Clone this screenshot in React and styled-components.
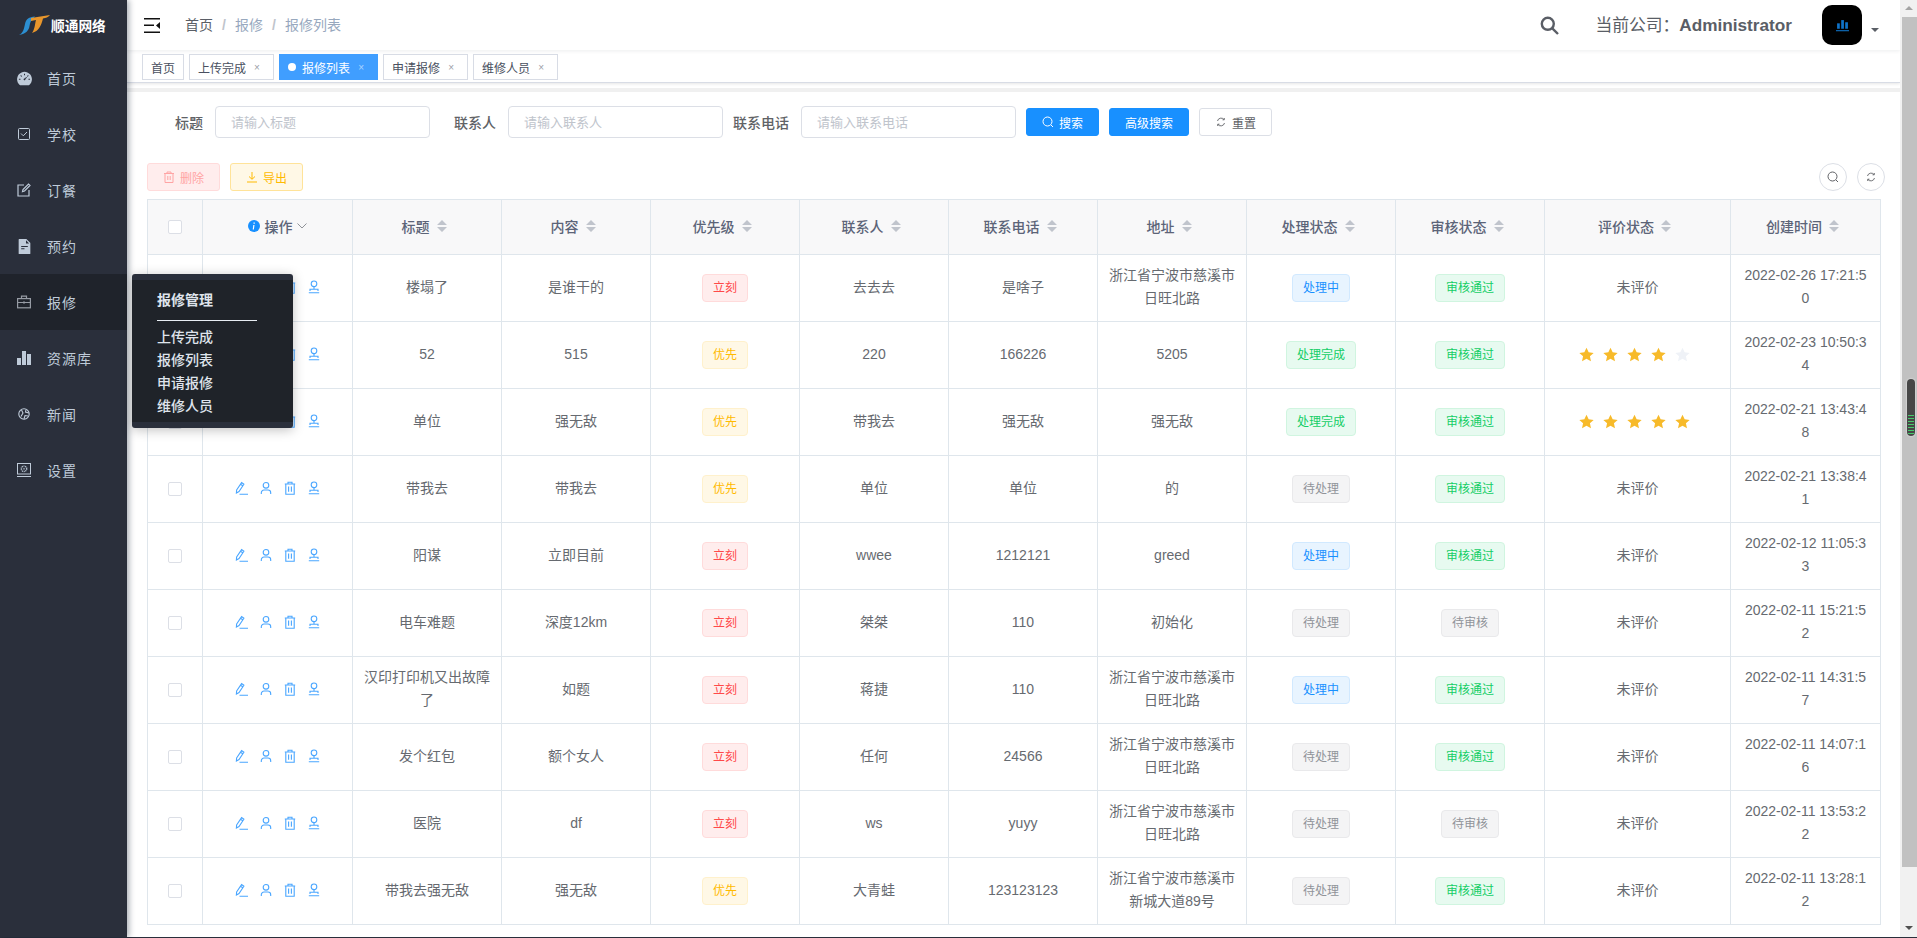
import React from "react";
import styled, { createGlobalStyle } from "styled-components";
import { AiFillDashboard, AiFillFileText } from "react-icons/ai";

const Global = createGlobalStyle`
  html, body { margin: 0; padding: 0; height: 100%; overflow: hidden; }
  body { font-family: "Liberation Sans", "Noto Sans CJK SC", sans-serif; background: #2a2f3b; }
  * { box-sizing: border-box; }
`;

const Page = styled.div`
  width: 1917px; height: 938px; display: grid; grid-template-columns: 127px 1773px 17px;
  padding-bottom: 1px; background: #2a2f3b; position: relative; overflow: hidden;
`;
const Sidebar = styled.aside`
  background: #2a2f3b; box-shadow: 2px 0 6px rgba(0,21,41,.35); z-index: 3; position: relative;
`;
const Brand = styled.div`
  height: 50px; display: flex; align-items: center; padding: 0 0 0 19px; gap: 1px;
  color: #fff; font-weight: 700; font-size: 13.7px;
`;
const NavList = styled.nav`display: flex; flex-direction: column;`;
const NavItem = styled.div`
  height: 56px; display: flex; align-items: center; padding-left: 17px; gap: 16px;
  font-size: 14px; letter-spacing: 1px; color: #bfcbd9;
  background: ${p => (p.$active ? "#1f232b" : "transparent")};
  svg { width: 14px; height: 14px; flex: none; color: ${p => (p.$active ? "#969ba4" : "#bfcbd9")}; }
`;
const NavDash = styled(AiFillDashboard)`
  && { width: 17px; height: 17px; margin: 0 -1.5px; }
`;
const NavFile = styled(AiFillFileText)`
  && { width: 17px; height: 17px; margin: 0 -1.5px; }
`;
const Popup = styled.div`
  position: absolute; left: 132px; top: 274px; width: 161px; height: 154px; z-index: 5;
  background: #1f2329; border-top: 6px solid #2a2f3b; border-bottom: 6px solid #2a2f3b; border-radius: 3px;
  box-shadow: 0 2px 12px rgba(0,0,0,.25); padding: 9px 0 0 25px; color: #dfe4ec; font-size: 14px;
`;
const PopupTitle = styled.div`
  font-weight: 700; line-height: 22px; width: 100px; padding-bottom: 9px; border-bottom: 1px solid #e8edf3; margin-bottom: 5px;
`;
const PopupLink = styled.div`line-height: 23px; font-weight: 500;`;

const Main = styled.main`background: #fff; display: flex; flex-direction: column; min-width: 0;`;
const TopBar = styled.header`
  height: 50px; flex: none; display: flex; align-items: center; padding-left: 17px; background: #fff;
  box-shadow: 0 1px 4px rgba(0,21,41,.08); position: relative; z-index: 2;
`;
const Crumbs = styled.div`display: flex; margin-left: 25px; font-size: 14px; color: #97a8be; line-height: 20px;`;
const CrumbHome = styled.span`color: #5a5e66;`;
const CrumbSep = styled.span`width: 22px; text-align: center; color: #c0c4cc; font-weight: 700;`;
const TopRight = styled.div`margin-left: auto; display: flex; align-items: center; padding-right: 20px;`;
const Company = styled.div`
  margin: 0 0 2px 36px; font-size: 16.8px; color: #5a5e66;
  b { font-size: 17.2px; }
`;
const Avatar = styled.div`
  width: 40px; height: 40px; margin-left: 30px; background: #000; border-radius: 10px;
  display: flex; align-items: center; justify-content: center;
`;
const Caret = styled.div`
  width: 0; height: 0; margin: 10px 1px 0 9px; border-left: 4px solid transparent; border-right: 4px solid transparent;
  border-top: 4px solid #5a5e66;
`;
const TabBar = styled.div`
  height: 33px; flex: none; display: flex; align-items: flex-start; gap: 5px; padding: 4px 0 0 15px;
  background: #fff; border-bottom: 1px solid #d8dce5; box-shadow: 0 1px 3px rgba(0,0,0,.1);
  position: relative; z-index: 1;
`;
const Tab = styled.div`
  height: 26px; display: flex; align-items: center; padding: 0 8px; font-size: 12px;
  color: ${p => (p.$active ? "#fff" : "#495060")}; background: ${p => (p.$active ? "#409eff" : "#fff")};
  border: 1px solid ${p => (p.$active ? "#409eff" : "#d8dce5")};
`;
const TabDot = styled.i`width: 8px; height: 8px; border-radius: 50%; background: #fff; margin-right: 6px;`;
const TabClose = styled.span`width: 14px; margin-left: 4px; margin-right: 1px; text-align: center; font-size: 10px; opacity: .55;`;
const Strip = styled.div`height: 4px; flex: none; margin-top: 5px; background: #f0f0f0;`;
const Content = styled.div`padding: 14px 20px 0; flex: 1; min-height: 0;`;
const Form = styled.form`display: flex; align-items: center; gap: 12px; padding-left: 2px; height: 32px; margin: 0;`;
const Field = styled.div`width: 281px; display: flex; align-items: center;`;
const Label = styled.label`width: 54px; margin-right: 12px; text-align: right; white-space: nowrap; font-size: 14px; font-weight: 500; color: #606266; flex: none; direction: rtl;`;
const Input = styled.input`
  width: 215px; height: 32px; border: 1px solid #dcdfe6; border-radius: 4px; padding: 0 15px; font: inherit; font-size: 13px; outline: none;
  &::placeholder { color: #c0c4cc; }
`;
const FormBtns = styled.div`display: flex; gap: 10px; margin-left: -2px;`;
const Btn = styled.button`
  height: 28px; padding: 0 15px; display: inline-flex; align-items: center; gap: 5px; font: inherit; font-size: 12px; border-radius: 3px;
  background: ${p => p.$bg}; border: 1px solid ${p => p.$line}; color: ${p => p.$fg};
  svg { width: 12px; height: 12px; flex: none; }
`;
const Toolbar = styled.div`display: flex; align-items: center; gap: 10px; margin: 24px -5px 8px 0; padding-top: 1px; height: 29px;`;
const Spacer = styled.div`flex: 1;`;
const RoundBtn = styled.button`
  width: 28px; height: 28px; border-radius: 50%; background: #fff; border: 1px solid #dcdfe6; color: #606266;
  display: flex; align-items: center; justify-content: center; padding: 0;
  svg { width: 12px; height: 12px; }
`;
const Table = styled.table`
  width: 1733px; table-layout: fixed; border-collapse: collapse; font-size: 14px; color: #666a70; text-align: center;
  th, td { border: 1px solid #dfe6ec; padding: 0 10px 2px; }
  td:last-child { padding: 0 12px 2px; }
`;
const Head = styled.th`height: 55px; background: #f8f8f9; color: #5c6478; font-weight: 500; font-size: 14px;`;
const HeadInner = styled.span`display: inline-flex; align-items: center; gap: 7px; padding-right: 6px;`;
const HeadOps = styled.span`
  display: inline-flex; align-items: center; gap: 5px; padding-left: 1px;
  svg:last-child { margin-left: -1px; margin-right: 2px; }
`;
const Cell = styled.td`height: 67px; line-height: 23px; word-break: break-all;`;
const Check = styled.span`display: inline-block; width: 14px; height: 14px; border: 1px solid #dcdfe6; border-radius: 2px; background: #fff; vertical-align: middle;`;
const Actions = styled.div`display: flex; justify-content: center; gap: 10px; svg { width: 14px; height: 14px; display: block; }`;
const Tag = styled.span`
  display: inline-block; height: 28px; line-height: 26px; padding: 0 10px; font-size: 12px; border-radius: 4px; white-space: nowrap;
  margin-top: 2px; vertical-align: middle;
  background: ${p => p.$c[0]}; border: 1px solid ${p => p.$c[1]}; color: ${p => p.$c[2]};
`;
const Stars = styled.div`display: flex; justify-content: center; gap: 9px; margin-right: 6px; svg { width: 15px; height: 15px; display: block; }`;

const Track = styled.div`background: #f1f1f1; position: relative; padding-top: 17px; z-index: 4;`;
const Thumb = styled.div`height: 850px; margin-left: 2px; background: #c1c1c1;`;
const Arrow = styled.i`
  position: absolute; left: 5px; width: 0; height: 0; border-left: 4px solid transparent; border-right: 4px solid transparent;
  ${p => (p.$up ? "top: 6px; border-bottom: 4px solid #a3a3a3;" : "top: 926px; border-top: 4px solid #505050;")}
`;
const Grip = styled.div`
  position: absolute; left: 7px; top: 379px; width: 8px; height: 57px; background: #474747; border-radius: 4px; overflow: hidden;
  box-shadow: 0 0 2px rgba(255,255,255,.9); display: flex; flex-direction: column; justify-content: flex-end; padding: 0 1px 2px; gap: 2px;
`;
const GripLine = styled.i`height: 1px; background: #47c96b;`;

const Logo = () => (
  <svg width="31" height="20" viewBox="0 0 31 20">
    <path d="M0 20C4 18 5 14 6 9 7 4 10 2 16 1.500L14 4C12 5 11 8 10.500 11 10 15 7 19 0 20Z" fill="#2c8fd1" />
    <path d="M12 3 31 0C29 2.500 27 3 24 3.500 22 11 20 16 13 18 16 14 16 8 17 5L12 6Z" fill="#e8962c" />
  </svg>
);
const CheckSquare = () => (
  <svg viewBox="0 0 14 14" fill="none" stroke="currentColor" strokeWidth="1">
    <rect x="1.500" y="1.500" width="11" height="11" rx="1" />
    <path d="M4 6.500 6.300 8.800 10 5" />
  </svg>
);
const EditSquare = () => (
  <svg viewBox="0 0 14 14" fill="none" stroke="currentColor" strokeWidth="1.200">
    <path d="M7 2H1v11h11V7" />
    <path d="M5.500 8.700 6 6.500 11.500 1 13 2.500 7.500 8 Z" />
  </svg>
);
const Case = () => (
  <svg viewBox="0 0 14 14" fill="none" stroke="currentColor" strokeWidth="1.200">
    <rect x=".6" y="3.600" width="12.800" height="9.200" />
    <path d="M4.500 3.500V1.200h5v2.300M.5 7.500h13M7 6.300v2.400" />
  </svg>
);
const Bars = () => (
  <svg viewBox="0 0 14 14" fill="currentColor">
    <rect x="0" y="7" width="4" height="7" /><rect x="5" y="0" width="4" height="14" /><rect x="10" y="3" width="4" height="11" />
  </svg>
);
const Globe = () => (
  <svg viewBox="0 0 14 14" fill="none" stroke="currentColor" strokeWidth="1.100">
    <circle cx="7" cy="7" r="5.200" />
    <path d="M4.500 3 6 6 4 9.500M7 12l1-3.500 3 .5M9 2.500 8.500 5l3.500 1" />
  </svg>
);
const Safe = () => (
  <svg viewBox="0 0 14 14" fill="none" stroke="currentColor" strokeWidth="1">
    <rect x=".5" y=".5" width="13" height="10.500" />
    <circle cx="7" cy="5.800" r="2.700" strokeDasharray="1 .7" strokeWidth="1.400" />
    <circle cx="7" cy="5.800" r="1" fill="currentColor" stroke="none" opacity=".6" />
    <path d="M0 13.500h14" />
  </svg>
);
const Fold = () => (
  <svg width="16" height="15" viewBox="0 0 16 15" fill="#111">
    <rect x="0" y="0" width="16" height="1.500" /><rect x="0" y="6.500" width="10" height="1.500" />
    <rect x="0" y="13.500" width="16" height="1.500" /><path d="M16 4v7l-4-3.500Z" />
  </svg>
);
const BigSearch = () => (
  <svg width="19" height="19" viewBox="0 0 19 19" fill="none" stroke="#5a5e66" strokeWidth="2.400">
    <circle cx="7.800" cy="7.800" r="6" /><path d="M12.300 12.300 18 18" />
  </svg>
);
const AvatarIcon = () => (
  <svg width="13" height="13" viewBox="0 0 12 12" fill="#0f72c7">
    <rect x="1" y="4" width="2.500" height="5" /><rect x="4.800" y="1" width="2.500" height="8" /><rect x="8.500" y="3" width="2.500" height="6" />
    <rect x="0" y="10.300" width="12" height="1" />
  </svg>
);
const ThinSearch = () => (
  <svg viewBox="0 0 12 12" fill="none" stroke="currentColor" strokeWidth="1">
    <circle cx="5.500" cy="5.500" r="4.500" /><path d="M9 9l2 2" />
  </svg>
);
const ThinRefresh = () => (
  <svg viewBox="0 0 12 12" fill="none" stroke="currentColor" strokeWidth=".9">
    <path d="M2.500 5A3.700 3.700 0 0 1 9 3.500M9.500 7A3.700 3.700 0 0 1 3 8.500" /><path d="M9.300 2v1.800H7.500M2.700 10V8.200h1.800" />
  </svg>
);
const TrashBtn = () => (
  <svg viewBox="0 0 12 12" fill="none" stroke="currentColor" strokeWidth="1">
    <path d="M1 2.500h10M4 2.500V1h4v1.500M2 2.500V11.500h8V2.500M4.800 5v4M7.200 5v4" />
  </svg>
);
const Download = () => (
  <svg viewBox="0 0 12 12" fill="none" stroke="currentColor" strokeWidth="1">
    <path d="M1 11h10M6 1v7M3 5.500 6 8.300 9 5.500" />
  </svg>
);
const Sort = () => (
  <svg width="10" height="12" viewBox="0 0 10 12" fill="#c0c4cc">
    <path d="M5 0l5 5H0ZM5 12l5-5H0Z" />
  </svg>
);
const Info = () => (
  <svg width="12" height="12" viewBox="0 0 12 12">
    <circle cx="6" cy="6" r="6" fill="#1890ff" /><path d="M6.800 2.400v1.300H5.500V2.400ZM6.500 5 5.900 9.600H4.700L5.300 5Z" fill="#fff" />
  </svg>
);
const Chevron = () => (
  <svg width="10" height="6" viewBox="0 0 10 6" fill="none" stroke="#909399"><path d="M.5.500 5 5 9.500.5" /></svg>
);
const Pencil = () => (
  <svg viewBox="0 0 14 14" fill="none" stroke="#4aa6ff" strokeWidth="1.100">
    <path d="M1.600 9 6.600 1.600 8.900 3.200 4 10.600 1.400 12ZM5.500 3.200l2.300 1.600M4.500 13.300h8.500" />
  </svg>
);
const Person = () => (
  <svg viewBox="0 0 14 14" fill="none" stroke="#4aa6ff" strokeWidth="1.100">
    <circle cx="7" cy="4.300" r="2.800" /><path d="M2.300 13v-1.300A2.700 2.700 0 0 1 5 9h4a2.700 2.700 0 0 1 2.700 2.700V13" />
  </svg>
);
const Bin = () => (
  <svg viewBox="0 0 14 14" fill="none" stroke="#4aa6ff" strokeWidth="1.100">
    <path d="M1.800 3h10.400M5 3V1.200h4V3M2.800 3v10.300h8.400V3M5.600 5.500v5.300M8.400 5.500v5.300" />
  </svg>
);
const Stamp = () => (
  <svg viewBox="0 0 14 14" fill="none" stroke="#4aa6ff" strokeWidth="1.100">
    <circle cx="7" cy="3.800" r="2.800" /><path d="M7 6.600v2.600M3 11V9.200h8V11M1.800 12.800h10.400" />
  </svg>
);
const Star = ({ on }) => (
  <svg viewBox="0 0 14 14"><path d="M7 .7 9 5l4.700.5-3.500 3.200 1 4.600L7 11l-4.200 2.300 1-4.600L.3 5.500 5 5Z" fill={on ? "#f7ba2a" : "#eff2f7"} /></svg>
);

const RED = ["#ffeded", "#ffdbdb", "#ff4949"];
const YEL = ["#fff8e6", "#fff1cc", "#ffba00"];
const BLU = ["#e8f4ff", "#d1e9ff", "#1890ff"];
const GRN = ["#e7faf0", "#d0f5e0", "#13ce66"];
const GRY = ["#f4f4f5", "#e9e9eb", "#909399"];
const tone = { 立刻: RED, 优先: YEL, 处理中: BLU, 处理完成: GRN, 审核通过: GRN, 待处理: GRY, 待审核: GRY };
const ADDR = "浙江省宁波市慈溪市日旺北路";

const rows = [
  ["楼塌了", "是谁干的", "立刻", "去去去", "是啥子", ADDR, "处理中", "审核通过", 0, "2022-02-26 17:21:50"],
  ["52", "515", "优先", "220", "166226", "5205", "处理完成", "审核通过", 4, "2022-02-23 10:50:34"],
  ["单位", "强无敌", "优先", "带我去", "强无敌", "强无敌", "处理完成", "审核通过", 5, "2022-02-21 13:43:48"],
  ["带我去", "带我去", "优先", "单位", "单位", "的", "待处理", "审核通过", 0, "2022-02-21 13:38:41"],
  ["阳谋", "立即目前", "立刻", "wwee", "1212121", "greed", "处理中", "审核通过", 0, "2022-02-12 11:05:33"],
  ["电车难题", "深度12km", "立刻", "桀桀", "110", "初始化", "待处理", "待审核", 0, "2022-02-11 15:21:52"],
  ["汉印打印机又出故障了", "如题", "立刻", "蒋捷", "110", ADDR, "处理中", "审核通过", 0, "2022-02-11 14:31:57"],
  ["发个红包", "额个女人", "立刻", "任何", "24566", ADDR, "待处理", "审核通过", 0, "2022-02-11 14:07:16"],
  ["医院", "df", "立刻", "ws", "yuyy", ADDR, "待处理", "待审核", 0, "2022-02-11 13:53:22"],
  ["带我去强无敌", "强无敌", "优先", "大青蛙", "123123123", "浙江省宁波市慈溪市新城大道89号", "待处理", "审核通过", 0, "2022-02-11 13:28:12"],
];
const columns = ["标题", "内容", "优先级", "联系人", "联系电话", "地址", "处理状态", "审核状态", "评价状态", "创建时间"];
const widths = [55, 150, 149, 149, 149, 149, 149, 149, 149, 149, 186, 150];
const nav = [
  ["首页", <NavDash />], ["学校", <CheckSquare />], ["订餐", <EditSquare />], ["预约", <NavFile />],
  ["报修", <Case />], ["资源库", <Bars />], ["新闻", <Globe />], ["设置", <Safe />],
];

export default function App() {
  return (
    <Page>
      <Global />
      <Sidebar>
        <Brand><Logo />顺通网络</Brand>
        <NavList>
          {nav.map(([t, i]) => <NavItem key={t} $active={t === "报修"}>{i}{t}</NavItem>)}
        </NavList>
      </Sidebar>
      <Popup>
        <PopupTitle>报修管理</PopupTitle>
        {["上传完成", "报修列表", "申请报修", "维修人员"].map(t => <PopupLink key={t}>{t}</PopupLink>)}
      </Popup>
      <Main>
        <TopBar>
          <Fold />
          <Crumbs>
            <CrumbHome>首页</CrumbHome><CrumbSep>/</CrumbSep>报修<CrumbSep>/</CrumbSep>报修列表
          </Crumbs>
          <TopRight>
            <BigSearch />
            <Company>当前公司：<b>Administrator</b></Company>
            <Avatar><AvatarIcon /></Avatar>
            <Caret />
          </TopRight>
        </TopBar>
        <TabBar>
          <Tab>首页</Tab>
          <Tab>上传完成<TabClose>×</TabClose></Tab>
          <Tab $active><TabDot />报修列表<TabClose>×</TabClose></Tab>
          <Tab>申请报修<TabClose>×</TabClose></Tab>
          <Tab>维修人员<TabClose>×</TabClose></Tab>
        </TabBar>
        <Strip />
        <Content>
          <Form>
            <Field><Label>标题</Label><Input placeholder="请输入标题" /></Field>
            <Field><Label>联系人</Label><Input placeholder="请输入联系人" /></Field>
            <Field><Label>联系电话</Label><Input placeholder="请输入联系电话" /></Field>
            <FormBtns>
              <Btn type="button" $bg="#1890ff" $line="#1890ff" $fg="#fff"><ThinSearch />搜索</Btn>
              <Btn type="button" $bg="#1890ff" $line="#1890ff" $fg="#fff">高级搜索</Btn>
              <Btn type="button" $bg="#fff" $line="#dcdfe6" $fg="#606266"><ThinRefresh />重置</Btn>
            </FormBtns>
          </Form>
          <Toolbar>
            <Btn type="button" $bg="#ffeded" $line="#ffdbdb" $fg="#ffa4a4"><TrashBtn />删除</Btn>
            <Btn type="button" $bg="#fff8e6" $line="#ffe399" $fg="#ffba00"><Download />导出</Btn>
            <Spacer />
            <RoundBtn type="button"><ThinSearch /></RoundBtn>
            <RoundBtn type="button"><ThinRefresh /></RoundBtn>
          </Toolbar>
          <Table>
            <colgroup>{widths.map((w, i) => <col key={i} width={w} />)}</colgroup>
            <thead>
              <tr>
                <Head><Check /></Head>
                <Head><HeadOps><Info />操作<Chevron /></HeadOps></Head>
                {columns.map(c => <Head key={c}><HeadInner>{c}<Sort /></HeadInner></Head>)}
              </tr>
            </thead>
            <tbody>
              {rows.map((r, i) => (
                <tr key={i}>
                  <Cell><Check /></Cell>
                  <Cell><Actions><Pencil /><Person /><Bin /><Stamp /></Actions></Cell>
                  {r.map((v, j) => (
                    <Cell key={j}>
                      {tone[v] ? <Tag $c={tone[v]}>{v}</Tag>
                        : j === 8 ? (v === 0 ? "未评价" : <Stars>{[1, 2, 3, 4, 5].map(n => <Star key={n} on={n <= v} />)}</Stars>)
                        : v}
                    </Cell>
                  ))}
                </tr>
              ))}
            </tbody>
          </Table>
        </Content>
      </Main>
      <Track>
        <Arrow $up />
        <Thumb />
        <Arrow />
        <Grip>{[0, 1, 2, 3, 4, 5, 6].map(n => <GripLine key={n} />)}</Grip>
      </Track>
    </Page>
  );
}
